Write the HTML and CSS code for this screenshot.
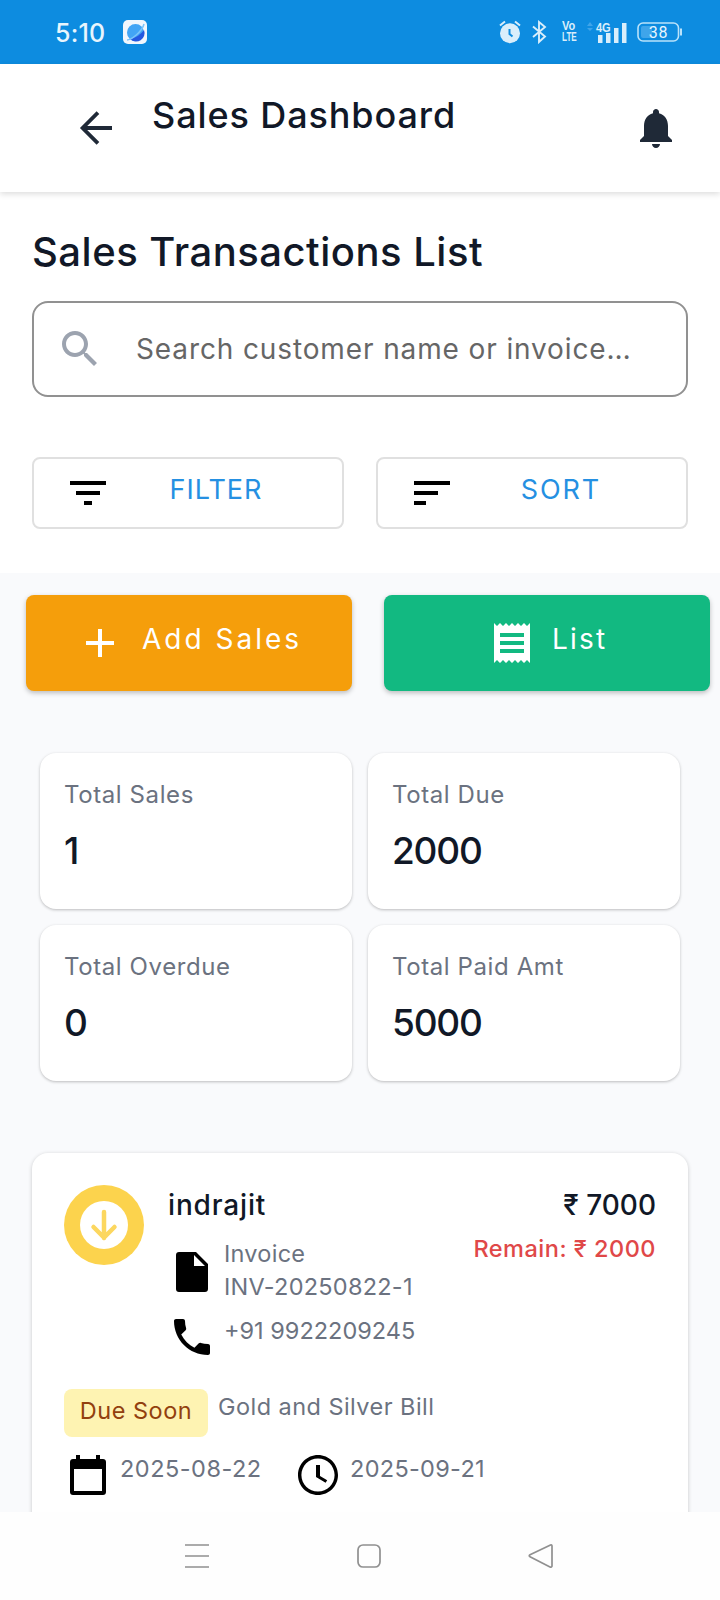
FILE: index.html
```
<!DOCTYPE html>
<html lang="en">
<head>
  <meta charset="UTF-8" />
  <meta name="viewport" content="width=device-width, initial-scale=1.0" />
  <title>Sales Dashboard</title>
  <link rel="stylesheet" href="styles.css">
</head>
<body>
  <div class="status-bar">
    <span class="clock">5:10</span>
    <svg class="app-icon" width="24" height="24" viewBox="0 0 24 24">
      <rect width="24" height="24" rx="5" fill="#f1f7fd"/>
      <circle cx="12.5" cy="12.5" r="8.5" fill="#42a5f5"/>
      <path d="M21 10a8.5 8.5 0 0 1-14 9c6-1 11-5 14-9z" fill="#2458e0"/>
      <path d="M4 20C8 20 19 12 21 4" fill="none" stroke="#7cc4fa" stroke-width="1.5"/>
    </svg>
    <div class="status-icons">
      <svg width="22" height="24" viewBox="0 0 22 24" fill="none" stroke="#d9eefb">
        <circle cx="11" cy="13.3" r="10" fill="#d9eefb" stroke="none"/>
        <path d="M1 5.500L6 1.500M21 5.500L16 1.500" stroke-width="2"/>
        <path d="M10.500 9v5l3 2.500" stroke="#0d8ce0" stroke-width="2"/>
      </svg>
      <svg class="bluetooth" width="15" height="24" viewBox="0 0 15 24" fill="none" stroke="#d9eefb" stroke-width="1.900">
        <path d="M1 6.500l12 10-6 5.500V2l6 5L1 17"/>
      </svg>
      <div class="volte"><span>Vo</span><span>LTE</span></div>
      <svg class="signal" width="40" height="26" viewBox="0 -4 40 26">
        <path d="M0 5l3-4 3 4zM0 7h6l-3 3z" fill="#3fa5ea"/>
        <text x="10.500" y="10.500" class="net">4G</text>
        <path d="M11 14h4.500v8H11zM19 12h4.500v10H19zM27 7h4.500v15H27zM35 2h4.500v20H35z" fill="#d9eefb"/>
      </svg>
      <svg class="battery" width="46" height="20" viewBox="0 0 46 20">
        <rect x="1" y="1" width="40.500" height="18" rx="5" fill="none" stroke="#b9e2fa" stroke-width="1.600"/>
        <path d="M4 6a2 2 0 0 1 2-2h9v12H6a2 2 0 0 1-2-2z" fill="#3fa5ea"/>
        <path d="M44 6.500v7" stroke="#b9e2fa" stroke-width="2"/>
        <text x="21.500" y="15.800" class="charge">38</text>
      </svg>
    </div>
  </div>

  <header class="header">
    <svg class="icon" viewBox="0 0 24 24" fill="none" stroke="#1f2937" stroke-width="2">
      <path d="M20 12H5.200" />
      <path d="M12 5l-7 7 7 7" stroke-linecap="square" stroke-width="1.900" transform="translate(.3 0)"/>
    </svg>
    <div class="header-title">Sales Dashboard</div>
    <svg class="icon bell" viewBox="0 0 24 24">
      <path d="M12 22c1.100 0 2-.9 2-2h-4c0 1.100.9 2 2 2zm6-6v-5c0-3.070-1.630-5.640-4.500-6.320V4c0-.83-.67-1.500-1.500-1.500s-1.500.67-1.500 1.500v.68C7.640 5.360 6 7.920 6 11v5l-2 2v1h16v-1l-2-2z" />
    </svg>
  </header>

  <main class="content">
    <section class="top">
      <h1>Sales Transactions List</h1>

      <div class="search">
        <svg class="icon" viewBox="0 0 24 24">
          <path d="M15.500 14h-.79l-.28-.27C15.410 12.590 16 11.110 16 9.500 16 5.910 13.090 3 9.500 3S3 5.910 3 9.500 5.910 16 9.500 16c1.610 0 3.090-.59 4.230-1.570l.27.28v.79l5 4.990L20.490 19l-4.990-5zm-6 0C7.010 14 5 11.990 5 9.500S7.010 5 9.500 5 14 7.010 14 9.500 11.990 14 9.500 14z" />
        </svg>
        <span>Search customer name or invoice…</span>
      </div>

      <div class="tools">
        <button class="tool">
          <svg class="icon" viewBox="0 0 24 24"><path d="M10 18h4v-2h-4v2zM3 6v2h18V6H3zm3 7h12v-2H6v2z" /></svg>
          <span>FILTER</span>
        </button>
        <button class="tool">
          <svg class="icon" viewBox="0 0 24 24"><path d="M3 18h6v-2H3v2zM3 6v2h18V6H3zm0 7h12v-2H3v2z" /></svg>
          <span class="sort">SORT</span>
        </button>
      </div>
    </section>

    <div class="actions">
      <button class="action add">
        <svg class="icon" viewBox="0 0 24 24"><path d="M19 13h-6v6h-2v-6H5v-2h6V5h2v6h6v2z" /></svg>
        <span>Add Sales</span>
      </button>
      <button class="action list">
        <svg class="icon" viewBox="0 0 24 24"><path d="M18 17H6v-2h12v2zm0-4H6v-2h12v2zm0-4H6V7h12v2zM3 22l1.500-1.500L6 22l1.500-1.500L9 22l1.500-1.500L12 22l1.500-1.500L15 22l1.500-1.500L18 22l1.500-1.500L21 22V2l-1.500 1.500L18 2l-1.500 1.500L15 2l-1.500 1.500L12 2l-1.500 1.500L9 2 7.500 3.500 6 2 4.500 3.500 3 2v20z" /></svg>
        <span>List</span>
      </button>
    </div>

    <div class="stats">
      <div class="stat">
        <div class="label">Total Sales</div>
        <div class="value">1</div>
      </div>
      <div class="stat">
        <div class="label">Total Due</div>
        <div class="value">2000</div>
      </div>
      <div class="stat">
        <div class="label">Total Overdue</div>
        <div class="value">0</div>
      </div>
      <div class="stat">
        <div class="label">Total Paid Amt</div>
        <div class="value">5000</div>
      </div>
    </div>

    <div class="transaction">
      <div class="summary">
        <div class="avatar">
          <svg width="48" height="48" viewBox="0 0 48 48">
            <circle cx="24" cy="24" r="24" fill="#fff" />
            <path d="M24 11v26M13.500 26L24 36.500 34.500 26" fill="none" stroke="#fcd75f" stroke-width="4.500" stroke-linecap="round" />
          </svg>
        </div>
        <div class="customer">
          <div class="name">indrajit</div>
          <div class="line invoice">
            <svg class="icon" viewBox="0 0 24 24"><path d="M5.500 2C4.600 2 4 2.600 4 3.500v17c0 .9.600 1.500 1.500 1.500h13c.9 0 1.500-.6 1.500-1.500V8l-6-6H5.500zM13 9V3.500L18.500 9H13z" /></svg>
            <span>Invoice<br>INV-20250822-1</span>
          </div>
          <div class="line phone">
            <svg class="icon" viewBox="0 0 24 24"><path d="M6.620 10.790c1.440 2.830 3.760 5.140 6.590 6.590l2.200-2.200c.27-.27.67-.36 1.020-.24 1.120.37 2.330.57 3.570.57.55 0 1 .45 1 1V20c0 .55-.45 1-1 1-9.390 0-17-7.610-17-17 0-.55.45-1 1-1h3.500c.55 0 1 .45 1 1 0 1.250.2 2.450.57 3.570.11.35.03.74-.25 1.020l-2.200 2.200z" /></svg>
            <span>+91 9922209245</span>
          </div>
        </div>
        <div class="amounts">
          <div class="total">₹ 7000</div>
          <div class="remain">Remain: ₹ 2000</div>
        </div>
      </div>

      <div class="bill">
        <span class="badge">Due Soon</span>
        <span class="bill-type">Gold and Silver Bill</span>
      </div>

      <div class="dates">
        <svg class="icon" viewBox="0 0 24 24"><path d="M19.500 4H18V2h-2v2H8V2H6v2H4.500C3.600 4 3 4.600 3 5.500v15c0 .9.600 1.500 1.500 1.500h15c.9 0 1.500-.6 1.500-1.500v-15c0-.9-.6-1.500-1.500-1.500zM19 20H5V9h14v11z" /></svg>
        <span class="date">2025-08-22</span>
        <svg class="icon" viewBox="0 0 24 24"><path d="M11.990 2C6.470 2 2 6.480 2 12s4.470 10 9.990 10C17.520 22 22 17.520 22 12S17.520 2 11.990 2zM12 20.300c-4.600 0-8.300-3.700-8.300-8.300S7.400 3.700 12 3.700s8.300 3.700 8.300 8.300-3.700 8.300-8.300 8.300zM13 7h-2v6l4.800 2.900.8-1.300L13 12.500z" /></svg>
        <span class="date">2025-09-21</span>
      </div>
    </div>
  </main>

  <nav class="nav-bar">
    <svg width="26" height="26" viewBox="0 0 26 26"><path d="M1 2h24M1 13h24M1 24h24" /></svg>
    <svg width="26" height="26" viewBox="0 0 26 26"><rect x="2" y="2" width="22" height="22" rx="5" /></svg>
    <svg width="26" height="26" viewBox="0 0 26 26"><path d="M22.500 2L2 11.800c-1 .5-1 1.500 0 2L22 24c1 .4 2 0 2-1V3c0-1-.7-1.400-1.500-1z" /></svg>
  </nav>
</body>
</html>
```

FILE: styles.css
```
* {
  box-sizing: border-box;
}

body {
  margin: 0;
  height: 1600px;
  display: flex;
  flex-direction: column;
  overflow: hidden;
  background: #f9fafc;
  color: #111827;
  font-family: Inter, sans-serif;
}

button {
  font-family: inherit;
}

svg {
  display: block;
  flex-shrink: 0;
}

.icon {
  width: 48px;
  height: 48px;
}

/* phone status bar */
.status-bar {
  height: 64px;
  flex-shrink: 0;
  display: flex;
  align-items: center;
  padding: 0 37px 0 55px;
  background: #0d8ce0;
  color: #e8f5fd;
}

.clock {
  width: 68px;
  padding-top: 1px;
  font-size: 25px;
  font-weight: 500;
  letter-spacing: 0.2px;
}

.status-icons {
  display: flex;
  align-items: center;
  margin-left: auto;
  color: #d9eefb;
}

.bluetooth {
  margin-left: 11px;
}

.volte {
  display: flex;
  flex-direction: column;
  width: 16px;
  margin-left: 15px;
  font: bold 12px/11px "Liberation Sans", sans-serif;
}

.volte span {
  width: 24px;
  height: 11px;
  transform: scaleX(0.68);
  transform-origin: left;
}

.volte span:first-child {
  transform: scaleX(0.92);
}

.signal {
  margin: -4px 0 0 9px;
}

.net {
  font: bold 13px "Liberation Sans", sans-serif;
  fill: #d9eefb;
  transform: scaleX(0.85);
}

.battery {
  margin-left: 10px;
}

.charge {
  font: 16px Roboto, sans-serif;
  letter-spacing: 0.8px;
  text-anchor: middle;
  fill: #e8f5fd;
}

/* header */
.header {
  height: 128px;
  flex-shrink: 0;
  display: flex;
  align-items: center;
  padding: 0 40px 0 72px;
  background: #fff;
  box-shadow: 0 2px 6px rgba(0, 0, 0, 0.14);
  z-index: 1;
}

.header-title {
  align-self: flex-start;
  margin: 27px 0 0 32px;
  font-size: 36px;
  line-height: 48px;
  font-weight: 500;
  letter-spacing: 0.9px;
}

.bell {
  margin-left: auto;
  fill: #1f2937;
}

.content {
  flex: 1;
  min-height: 0;
  overflow: hidden;
}

.top {
  height: 381px;
  padding: 36px 32px 0;
  background: #fff;
}

h1 {
  margin: 0 0 25px;
  font-size: 40px;
  line-height: 48px;
  font-weight: 500;
  letter-spacing: 0.5px;
}

.search {
  display: flex;
  align-items: center;
  height: 96px;
  padding-left: 22px;
  border: 2px solid #919191;
  border-radius: 16px;
  font-size: 28px;
  letter-spacing: 0.88px;
  color: #666;
  white-space: nowrap;
}

.search .icon {
  margin-right: 32px;
  fill: #9ca3af;
}

.tools {
  display: flex;
  gap: 32px;
  margin-top: 60px;
}

.tool {
  flex: 1;
  height: 72px;
  display: flex;
  align-items: center;
  padding: 0 22px 0 30px;
  background: #fff;
  border: 2px solid #e0e0e0;
  border-radius: 8px;
  color: #2590e2;
  font-size: 27px;
  letter-spacing: 1px;
}

.tool span {
  flex: 1;
  padding-bottom: 8px;
}

.tool .sort {
  padding-left: 2px;
  letter-spacing: 1.9px;
}

/* action buttons */
.actions {
  display: grid;
  grid-template-columns: 1fr 1fr;
  gap: 32px;
  padding: 22px 10px 0 26px;
}

.action {
  height: 96px;
  display: flex;
  align-items: center;
  padding: 0 0 0 50px;
  border: none;
  border-radius: 8px;
  box-shadow: 0 2px 5px rgba(0, 0, 0, 0.25);
  color: #fff;
  fill: #fff;
  font-size: 28px;
  letter-spacing: 3px;
}

.action span {
  padding: 0 0 8px 18px;
}

.add {
  background: #f59e0b;
}

.list {
  padding-left: 104px;
  background: #12b981;
  letter-spacing: 2.2px;
}

.list span {
  padding-left: 16px;
}

/* totals */
.stats {
  display: grid;
  grid-template-columns: 1fr 1fr;
  gap: 16px;
  padding: 62px 40px 0;
}

.stat {
  height: 156px;
  padding: 24px;
  background: #fff;
  border-radius: 16px;
  box-shadow: 0 1px 3px rgba(0, 0, 0, 0.25);
}

.label {
  font-size: 24px;
  line-height: 36px;
  letter-spacing: 0.6px;
  color: #6b7280;
}

.value {
  margin-top: 14px;
  font-size: 37px;
  line-height: 48px;
  font-weight: 500;
  letter-spacing: -1.2px;
}

/* transaction card */
.transaction {
  height: 400px;
  margin: 72px 32px 0;
  padding: 32px;
  background: #fff;
  border-radius: 16px;
  box-shadow: 0 1px 4px rgba(0, 0, 0, 0.2);
  color: #6b7280;
  font-size: 23.5px;
  line-height: 33px;
}

.summary {
  display: flex;
}

.avatar {
  width: 80px;
  height: 80px;
  padding: 16px;
  margin-right: 24px;
  background: #fcd34d;
  border-radius: 50%;
}

.name,
.total {
  font-size: 28px;
  line-height: 40px;
  font-weight: 500;
  color: #111827;
}

.name {
  letter-spacing: 0.85px;
}

.line {
  display: flex;
}

.line span {
  padding-left: 8px;
}

.invoice {
  margin-top: 12px;
  letter-spacing: 0.25px;
}

.invoice .icon {
  margin-top: 11px;
}

.phone {
  margin-top: 10px;
}

.phone span {
  padding-top: 1px;
}

.amounts {
  margin-left: auto;
  text-align: right;
}

.remain {
  margin-top: 7px;
  color: #e04848;
  font-weight: 500;
  letter-spacing: 0.5px;
}

.bill {
  display: flex;
  margin-top: 28px;
}

.badge {
  width: 144px;
  height: 48px;
  padding-top: 5px;
  text-align: center;
  background: #fef3b2;
  border-radius: 8px;
  color: #92400e;
  letter-spacing: 0.5px;
}

.bill-type {
  margin: 1px 0 0 10px;
  letter-spacing: 0.45px;
}

.dates {
  display: flex;
  margin-top: 14px;
}

.date {
  width: 182px;
  padding: 1px 0 0 8px;
  letter-spacing: 0.5px;
}

.date:last-child {
  letter-spacing: 0.3px;
}

/* android navigation */
.nav-bar {
  height: 88px;
  flex-shrink: 0;
  display: flex;
  justify-content: center;
  align-items: center;
  gap: 146px;
  padding-left: 18px;
  background: #fefefe;
  fill: none;
  stroke: #909090;
  stroke-width: 1.7;
}
```
